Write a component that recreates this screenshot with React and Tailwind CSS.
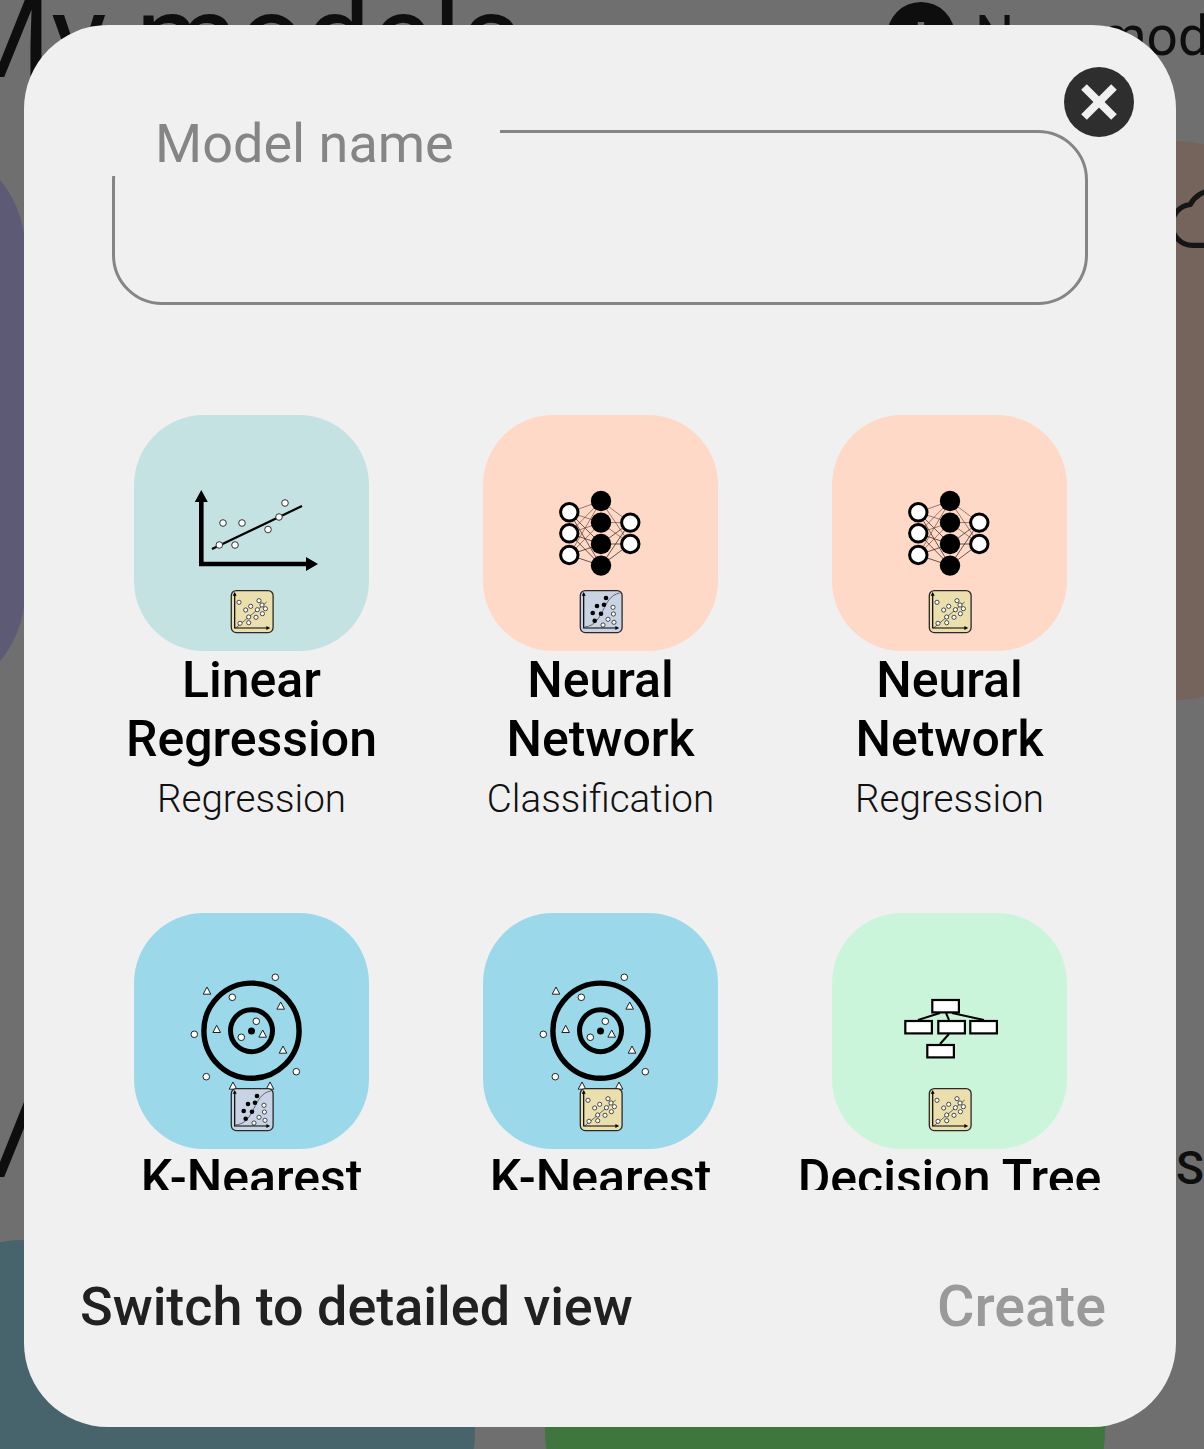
import React from 'react';
import { X } from 'lucide-react';

const REG_DOTS = [[8.3, 12.3], [28.3, 10.7], [20, 16.3], [15, 20], [31.3, 15], [34.7, 18.7], [26.7, 19.7], [31.7, 23.7], [25.3, 27.3], [18, 27], [18, 32.7], [9.3, 33.3]];
const CLS_BLACK = [[26.3, 8], [17.3, 16], [24.3, 14.7], [13, 23], [21.3, 23.7], [15, 30.7]];
const CLS_WHITE = [[33.3, 17.3], [33.7, 24], [28.3, 29.3], [34.3, 32.3], [23.3, 35]];

// little dataset thumbnail in the bottom of each tile
const DataBadge = ({ kind }) => (
    <g transform="translate(96.7 175)">
        <rect x="0.6" y="0.6" width="41.8" height="42" rx="5" fill={kind === 'reg' ? '#ecdfae' : '#c8d4e4'} stroke="#2a2a2a" strokeWidth="1.3" />
        {kind === 'reg' ? (
            <>
                <path d="M5 38L36 12" stroke="#666" strokeWidth="1" fill="none" />
                {REG_DOTS.map(([x, y], i) => (
                    <circle key={i} cx={x} cy={y} r="2.1" fill="#fff" stroke="#222" strokeWidth="0.8" />
                ))}
            </>
        ) : (
            <>
                <path d="M5 37C25 35 22 6 40 3" stroke="#666" strokeWidth="1" fill="none" />
                {CLS_BLACK.map(([x, y], i) => (
                    <circle key={i} cx={x} cy={y} r="2.3" fill="#000" />
                ))}
                {CLS_WHITE.map(([x, y], i) => (
                    <circle key={i} cx={x} cy={y} r="2.1" fill="#fff" stroke="#222" strokeWidth="0.8" />
                ))}
            </>
        )}
        <path d="M4 5V38H37" stroke="#000" strokeWidth="1.2" fill="none" />
        <path d="M4 2L2 5.8H6ZM39.5 38L35.7 36V40Z" fill="#000" />
    </g>
);

const LinearArt = () => (
    <>
        <path d="M67.3 80V149H174" stroke="#000" strokeWidth="4.6" fill="none" />
        <path d="M67.3 75L60.8 87H73.8ZM184 149L172 142V156Z" fill="#000" />
        <path d="M78 134L168 91" stroke="#000" strokeWidth="2.2" />
        {[[85.3, 130], [101, 130], [89, 108], [108, 108], [134, 114.5], [145, 102], [151, 88]].map(([x, y], i) => (
            <circle key={i} cx={x} cy={y} r="3.3" fill="#fff" stroke="#333" strokeWidth="1" />
        ))}
    </>
);

const NN_IN = [97.3, 118.3, 140];
const NN_MID = [86, 107.6, 129, 150.6];
const NN_OUT = [107.6, 129];

const NeuralArt = () => (
    <>
        {NN_IN.map((a) => NN_MID.map((b) => (
            <path key={`${a}-${b}`} d={`M86.3 ${a}L118 ${b}`} stroke={b > 110 ? '#2a1c16' : '#7a4c3c'} strokeWidth="0.7" />
        )))}
        {NN_MID.map((a) => NN_OUT.map((b) => (
            <path key={`${a}-${b}`} d={`M118 ${a}L147 ${b}`} stroke={a > 110 ? '#2a1c16' : '#7a4c3c'} strokeWidth="0.7" />
        )))}
        {NN_IN.map((y) => <circle key={y} cx="86.3" cy={y} r="8.7" fill="#fff" stroke="#000" strokeWidth="3" />)}
        {NN_MID.map((y) => <circle key={y} cx="118" cy={y} r="10.2" fill="#000" />)}
        {NN_OUT.map((y) => <circle key={y} cx="147.3" cy={y} r="8.7" fill="#fff" stroke="#000" strokeWidth="3" />)}
    </>
);

const KNN_DOTS = [[141.3, 64.3], [98.3, 84.3], [122.3, 108.3], [107.3, 124.3], [60.3, 121.3], [72.3, 163.7], [162.3, 158.7]];
const KNN_TRIS = [[73, 78], [146.7, 93], [82.7, 116.3], [128.7, 121], [149, 137], [99, 173], [136, 173]];

const KnnArt = () => (
    <>
        <circle cx="117.5" cy="117.7" r="47.6" fill="none" stroke="#000" strokeWidth="5.4" />
        <circle cx="117.5" cy="117.7" r="21" fill="none" stroke="#000" strokeWidth="5" />
        <circle cx="117.5" cy="118" r="3.5" fill="#000" />
        {KNN_DOTS.map(([x, y], i) => (
            <circle key={i} cx={x} cy={y} r="3.3" fill="#fff" stroke="#222" strokeWidth="1" />
        ))}
        {KNN_TRIS.map(([x, y], i) => (
            <path key={i} d={`M${x} ${y - 4}L${x + 3.8} ${y + 3.2}H${x - 3.8}Z`} fill="#fff" stroke="#222" strokeWidth="1" />
        ))}
    </>
);

const TreeArt = () => (
    <>
        <path d="M108 100L86 107M114 100L117 107M120 100L152 107M117 121L108 131" stroke="#000" strokeWidth="2" />
        {[[100.3, 87], [73.3, 108], [106.3, 108], [138.3, 108], [95.3, 132]].map(([x, y], i) => (
            <rect key={i} x={x} y={y} width="26.6" height="12.4" fill="#fff" stroke="#000" strokeWidth="2.2" />
        ))}
    </>
);

const MODELS = [
    { name: 'Linear Regression', sub: 'Regression', bg: 'bg-[#c4e2e2]', Art: LinearArt, data: 'reg' },
    { name: 'Neural Network', sub: 'Classification', bg: 'bg-[#ffd9c7]', Art: NeuralArt, data: 'cls' },
    { name: 'Neural Network', sub: 'Regression', bg: 'bg-[#ffd9c7]', Art: NeuralArt, data: 'reg' },
    { name: 'K-Nearest Neighbors', sub: 'Classification', bg: 'bg-[#9bd9ea]', Art: KnnArt, data: 'cls' },
    { name: 'K-Nearest Neighbors', sub: 'Regression', bg: 'bg-[#9bd9ea]', Art: KnnArt, data: 'reg' },
    { name: 'Decision Tree', sub: 'Regression', bg: 'bg-[#cbf5da]', Art: TreeArt, data: 'reg' },
];

const ModelTile = ({ model }) => {
    const { Art } = model;
    return (
        <div className="flex flex-col items-center text-center">
            <div className={`w-[235px] h-[236px] shrink-0 rounded-[70px] ${model.bg}`}>
                <svg width="235" height="236" viewBox="0 0 235 236" className="block">
                    <Art />
                    <DataBadge kind={model.data} />
                </svg>
            </div>
            <div className="w-[340px] text-[50px] leading-[59px] font-medium text-black">{model.name}</div>
            <div className="text-[38.6px] leading-[60px] font-light text-[#111111]">{model.sub}</div>
        </div>
    );
};

const App = () => {
    return (
        <div className="relative w-[1204px] h-[1449px] overflow-hidden bg-[#6f6f6f] font-[Roboto,sans-serif] text-[#0e0e0e]">
            {/* page behind the dialog */}
            <div className="flex h-[141px] items-start">
                <div className="ml-[-51px] mt-[-21px] shrink-0 text-[117px] leading-[116px] whitespace-nowrap">My models</div>
                <div className="absolute left-[887px] top-[2px] flex items-center gap-[20px] whitespace-nowrap">
                    <div className="flex w-[68px] h-[68px] items-center justify-center rounded-full bg-[#0e0e0e]">
                        <div className="text-[#6f6f6f] text-[56px] leading-none font-medium">+</div>
                    </div>
                    <div className="text-[55px] leading-[68px]">New model</div>
                </div>
            </div>
            <div className="flex h-[559px] ml-[-535px] gap-[70px]">
                <div className="w-[560px] shrink-0 rounded-[108px] bg-[#5c5a75]" />
                <div className="w-[560px] shrink-0 rounded-[108px] bg-[#5c5a75]" />
                <div className="flex w-[560px] shrink-0 justify-end rounded-[108px] bg-[#75645c] pt-[36px] pr-[31px]">
                    <svg width="82" height="82" viewBox="0 0 24 24" fill="none" stroke="#151515" strokeWidth="1.5">
                        <path d="M19.35 10.04C18.67 6.59 15.64 4 12 4 9.11 4 6.6 5.64 5.35 8.04 2.34 8.36 0 10.91 0 14c0 3.31 2.69 6 6 6h13c2.76 0 5-2.24 5-5 0-2.64-2.05-4.78-4.65-4.96z" />
                    </svg>
                </div>
            </div>
            <div className="flex h-[161px] mt-[379px] justify-between items-start">
                <div className="ml-[-51px] text-[117px] leading-[116px] whitespace-nowrap">My datasets</div>
                <div className="w-[28px] mt-[62px] text-[46px] leading-[54px] font-medium whitespace-nowrap">Samples</div>
            </div>
            <div className="flex h-[300px] ml-[-85px] gap-[70px]">
                <div className="w-[560px] shrink-0 rounded-[108px] bg-[#47636b]" />
                <div className="w-[560px] shrink-0 rounded-[108px] bg-[#3e763e]" />
            </div>

            {/* dialog */}
            <div className="absolute left-[24px] top-[25px] flex w-[1152px] h-[1402px] flex-col rounded-[84px] bg-[#f0f0f0]">
                <button className="absolute right-[42px] top-[42px] flex w-[70px] h-[70px] items-center justify-center rounded-full bg-[#2e2e2e]">
                    <X size={60} color="#f0f0f0" strokeWidth={3.2} strokeLinecap="butt" />
                </button>

                <div className="relative mx-[88px] mt-[105px] h-[175px] shrink-0 rounded-[50px] border-[3px] border-[#858585]">
                    <div className="absolute left-[-4px] top-[-5px] w-[389px] h-[48px] bg-[#f0f0f0] pl-[44px]">
                        <span className="block mt-[-16px] text-[54px] leading-[64px] text-[#858585]">Model name</span>
                    </div>
                </div>

                <div className="mt-[110px] h-[775px] shrink-0 overflow-hidden">
                    <div className="grid grid-cols-[349px_349px_349px] gap-y-[84px] pl-[53px]">
                        {MODELS.map((model, i) => <ModelTile key={i} model={model} />)}
                    </div>
                </div>

                <div className="flex items-start justify-between pt-[85px] pl-[56px] pr-[70px]">
                    <button className="text-[53.9px] leading-[64px] font-medium text-[#212121]">Switch to detailed view</button>
                    <button className="text-[57.5px] leading-[64px] font-medium text-[#9a9a9a]">Create</button>
                </div>
            </div>
        </div>
    );
};

export default App;
